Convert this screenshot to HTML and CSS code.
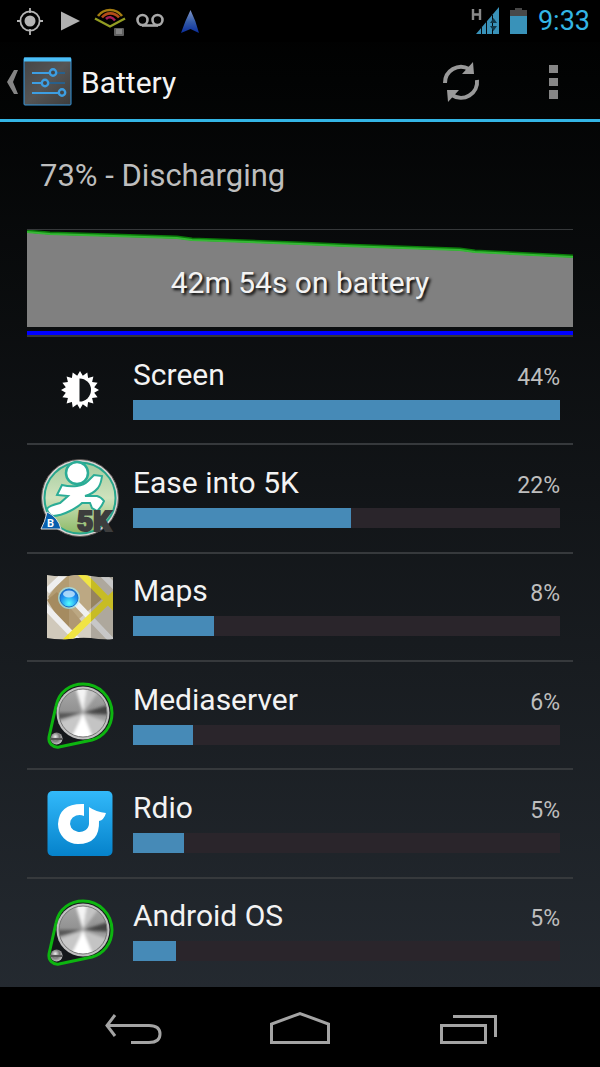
FILE: index.html
```html
<!DOCTYPE html>
<html lang="en">
<head>
  <meta charset="UTF-8" />
  <meta name="viewport" content="width=device-width, initial-scale=1.0"/>
  <title>Battery</title>
  <link rel="stylesheet" href="styles.css">
</head>
<body>

  <!-- shared gradients and the system process icon -->
  <svg class="defs" width="0" height="0" aria-hidden="true">
    <defs>
      <linearGradient id="metal" x1="0" y1="0" x2="0" y2="1">
        <stop offset="0" stop-color="#a8a8a8"/>
        <stop offset=".5" stop-color="#909090"/>
        <stop offset="1" stop-color="#d0d0d0"/>
      </linearGradient>
      <radialGradient id="knob" cx=".4" cy=".35" r=".7">
        <stop offset="0" stop-color="#eee"/>
        <stop offset=".5" stop-color="#777"/>
        <stop offset="1" stop-color="#ccc"/>
      </radialGradient>
      <clipPath id="disc"><circle cx="43" cy="38" r="24"/></clipPath>
      <filter id="soft"><feGaussianBlur stdDeviation="1.5"/></filter>
    </defs>
    <symbol id="system" viewBox="0 0 80 80">
      <path d="M16 31C19 16 31 9 43 9a29 29 0 0 1 29 29c0 14-9 24-20 27L19 72c-6 1-11-4-10-10Z" fill="#14171a" stroke="#0db510" stroke-width="3"/>
      <circle cx="43" cy="38" r="26.500" fill="#c0c0c0"/>
      <circle cx="43" cy="38" r="24" fill="url(#metal)"/>
      <g clip-path="url(#disc)">
        <g filter="url(#soft)">
          <path d="M43 38L34 8h14z" fill="#f4f4f4"/>
          <path d="M43 38L48 8 62 12z" fill="#c4c4c4"/>
          <path d="M43 38L74 28v12z" fill="#454545"/>
          <path d="M43 38L12 38v8z" fill="#555"/>
          <path d="M43 38L12 50 26 70z" fill="#c8c8c8"/>
          <path d="M43 38L28 70h28z" fill="#fff"/>
          <path d="M43 38L56 70 74 50z" fill="#c4c4c4"/>
        </g>
      </g>
      <circle cx="43" cy="38" r="24" fill="none" stroke="#777" stroke-width="1"/>
      <circle cx="16.500" cy="63.500" r="6" fill="url(#knob)"/>
      <path d="M11 64h11" stroke="#555" stroke-width="2"/>
    </symbol>
  </svg>

  <div class="status-bar">
    <div class="notifications">
      <svg width="40" height="40" viewBox="0 0 40 40">
        <g fill="none" stroke="#b4b4b4" stroke-width="1.800"><circle cx="20" cy="20" r="9.600"/><path d="M20 7v5M20 28v6M7 20h4M29 20h4"/></g>
        <circle cx="20" cy="20" r="5.500" fill="#b4b4b4"/>
      </svg>
      <svg width="40" height="40" viewBox="0 0 40 40"><path d="M11 10.500l19 9.500-19 9.500z" fill="#b0b0b0"/></svg>
      <svg width="40" height="40" viewBox="0 0 40 40" fill="none">
        <path d="M5 17.500l15 8 15-8" stroke="#929c22" stroke-width="2.400"/>
        <path d="M8 15C14 7 26 7 32 15" stroke="#a47c10" stroke-width="2.600"/>
        <path d="M12 16.500c4-5 12-6 17 0" stroke="#b44c18" stroke-width="2.600"/>
        <path d="M16 18c3-3 6-2 9 1.500" stroke="#a31c57" stroke-width="2.600"/>
        <rect x="24" y="27" width="10" height="8" rx="1" fill="#606060"/>
        <path d="M26 29h6M27 30v3M29 30v3M31 30v3" stroke="#aaa"/>
      </svg>
      <svg width="40" height="40" viewBox="0 0 40 40" fill="none" stroke="#a8a8a8" stroke-width="2.600"><circle cx="12.500" cy="19" r="5"/><circle cx="27.500" cy="19" r="5"/><path d="M12 24.500h16"/></svg>
      <svg width="40" height="40" viewBox="0 0 40 40">
        <defs><linearGradient id="arrow" x1="0" y1="0" x2="0" y2="1"><stop offset="0" stop-color="#8296c8"/><stop offset=".5" stop-color="#365da9"/><stop offset="1" stop-color="#0a2d9b"/></linearGradient></defs>
        <path d="M20.500 9Q26 20 29 32l-8.500-4L11 32Q15 20 20.500 9z" fill="url(#arrow)"/>
      </svg>
    </div>
    <div class="system-status">
      <svg width="30" height="30" viewBox="0 0 30 30">
        <path d="M3 3v11M10 3v11M3 8.500h7" stroke="#8a8a8a" stroke-width="2.400"/>
        <path d="M6 28L29 1v27z" fill="#3992b9"/>
        <path d="M11.500 20v9M16.500 15v14M22.500 9v19" stroke="#05090b" stroke-width="1"/>
        <path d="M20 17l3.500-5 3.500 5zM20 20l3.500 5 3.500-5z" fill="#12394a"/>
      </svg>
      <svg width="18" height="28" viewBox="0 0 18 28"><path d="M0 3h5V1h7v2h5v6H0z" fill="#484848"/><path d="M0 9h17v18H0z" fill="#3992b9"/></svg>
      <span class="clock">9:33</span>
    </div>
  </div>

  <header class="action-bar">
    <a class="up" href="#">
      <svg width="14" height="26" viewBox="0 0 14 26"><path d="M8 1h4L7 13l5 12H8L1 13z" fill="#858585"/></svg>
      <svg width="50" height="50" viewBox="0 0 50 50">
        <defs><linearGradient id="panel" x1="0" y1="0" x2="1" y2="1"><stop offset="0" stop-color="#444"/><stop offset=".5" stop-color="#555"/><stop offset="1" stop-color="#3c3c3c"/></linearGradient></defs>
        <rect x="1" y="1" width="47" height="47" rx="1" fill="url(#panel)" stroke="#3797dd"/>
        <path d="M1 2.500h47" stroke="#4cc0f8" stroke-width="4"/>
        <path d="M9 16h17M9 26h9M9 36h26" stroke="#3d9ee2" stroke-width="2"/>
        <path d="M33 16h9M25 26h17" stroke="#28608c" stroke-width="2"/>
        <g fill="#454545" stroke="#3d9ee2" stroke-width="2.400"><circle cx="30" cy="15.500" r="3.200"/><circle cx="22" cy="26" r="3.200"/><circle cx="39" cy="35.500" r="3.200"/></g>
      </svg>
      <h1>Battery</h1>
    </a>
    <button class="action" aria-label="Refresh">
      <svg width="40" height="40" viewBox="0 0 40 40">
        <g fill="none" stroke="#999" stroke-width="4"><path d="M4 21A16 16 0 0 1 28 7"/><path d="M36 18A16 16 0 0 1 11 33"/></g>
        <path d="M32 0l1 12H21zM6 28h12L7 40z" fill="#999"/>
      </svg>
    </button>
    <button class="action" aria-label="More options">
      <svg width="10" height="34" viewBox="0 0 10 34"><path d="M0 0h9v8H0zM0 13h9v8H0zM0 25h9v9H0z" fill="#868686"/></svg>
    </button>
  </header>

  <main>
    <p class="state">73% - Discharging</p>

    <a class="history" href="#">
      <svg width="100%" height="105" viewBox="0 0 546 105" preserveAspectRatio="none">
        <path d="M0 1L23 3 150 7 165 9 273 13 318 15 433 19 448 21 546 26V97H0z" fill="#808080"/>
        <path d="M0 1L23 3 150 7 165 9 273 13 318 15 433 19 448 21 546 26" fill="none" stroke="#0a7a0a" stroke-width="3"/>
        <path d="M0 2L23 4 150 8 165 10 273 14 318 16 433 20 448 22 546 27" fill="none" stroke="#35b835" stroke-width="2"/>
        <path d="M0 101h546v4H0z" fill="#00f"/>
      </svg>
      <span class="duration">42m 54s on battery</span>
    </a>

    <ul class="usage">
      <li>
        <svg class="icon" viewBox="0 0 80 80">
          <path d="M40 21L42.800 25.800 47.300 22.400 48.100 27.900 53.400 26.600 52.100 31.900 57.600 32.700 54.200 37.200 59 40 54.200 42.800 57.600 47.300 52.100 48.100 53.400 53.400 48.100 52.100 47.300 57.600 42.800 54.200 40 59 37.200 54.200 32.700 57.600 31.900 52.100 26.600 53.400 27.900 48.100 22.400 47.300 25.800 42.800 21 40 25.800 37.200 22.400 32.700 27.900 31.900 26.600 26.600 31.900 27.900 32.700 22.400 37.200 25.800z" fill="#fff"/>
          <path d="M39.500 28.500a11.500 11.500 0 0 1 0 23z" fill="#111417"/>
        </svg>
        <div class="info">
          <div class="label"><span>Screen</span><span class="percent">44%</span></div>
          <div class="bar"><div class="fill" style="width: 100%"></div></div>
        </div>
      </li>
      <li>
        <svg class="icon" viewBox="0 0 80 80">
          <defs><linearGradient id="grass" x1="0" y1="0" x2="0" y2="1"><stop offset="0" stop-color="#a5cc9f"/><stop offset=".5" stop-color="#cfe2bd"/><stop offset="1" stop-color="#8eba68"/></linearGradient></defs>
          <circle cx="40" cy="40" r="38.500" fill="#d8d4d2" stroke="#5a5452"/>
          <circle cx="40" cy="40" r="35.500" fill="url(#grass)" stroke="#27a68c" stroke-width="2"/>
          <path d="M22 27Q30 29 37 28 44 27 48 23L54 17 62 18Q61 26 58 30 53 36 45 38L57 38Q61 39 64 43 61 50 57 53L52 50 50 45 42 45Q38 49 30 53 20 58 13 58 8 56 7 51 8 48 20 45L28 38 17 37z" fill="#fff" stroke="#2aac96" stroke-width="2"/>
          <circle cx="37" cy="15" r="11" fill="#fff" stroke="#2aac96" stroke-width="2.500"/>
          <path d="M1 71Q5 64 7 54q11 5 14 17z" fill="#075fae" stroke="#ddd"/>
          <text x="7" y="69" class="badge">B</text>
          <text x="37" y="73" class="distance">5K</text>
        </svg>
        <div class="info">
          <div class="label"><span>Ease into 5K</span><span class="percent">22%</span></div>
          <div class="bar"><div class="fill" style="width: 51%"></div></div>
        </div>
      </li>
      <li>
        <svg class="icon" viewBox="0 0 80 80">
          <defs>
            <clipPath id="sheet"><path d="M7 8q11 2 22 1 11-2 22 0 11 2 22 1v62q-11 1-22-1-11-1-22 1-11 1-22-1z"/></clipPath>
            <radialGradient id="pin" cx=".5" cy=".8" r=".8"><stop offset="0" stop-color="#5ff"/><stop offset=".6" stop-color="#1e90f0"/><stop offset="1" stop-color="#1768d0"/></radialGradient>
          </defs>
          <g clip-path="url(#sheet)">
            <path d="M0 0h80v80H0z" fill="#d0c9bb"/>
            <path d="M28 3L8 30 32 58 62 32 42 6z" fill="#b39c72"/>
            <path d="M7 33l10-8 25 30-14 12z" fill="#a58b60"/>
            <path d="M0 34l44 46M7 24L28 4M34 34l42 44M58 3l22 22" stroke="#eee" stroke-width="6" fill="none"/>
            <path d="M38 3L80 46M80 22L24 76" stroke="#eee12b" stroke-width="7" fill="none"/>
            <path d="M29 0h22v80H29z" fill="#fff" opacity=".12"/>
            <path d="M51 0h22v80H51z" fill="#000" opacity=".16"/>
          </g>
          <circle cx="29" cy="31" r="11" fill="#9eefff" opacity=".65"/>
          <circle cx="29" cy="31" r="9" fill="url(#pin)" stroke="#1670c8"/>
          <ellipse cx="29" cy="27" rx="6" ry="3.500" fill="#c8eaff" opacity=".8"/>
        </svg>
        <div class="info">
          <div class="label"><span>Maps</span><span class="percent">8%</span></div>
          <div class="bar"><div class="fill" style="width: 19%"></div></div>
        </div>
      </li>
      <li>
        <svg class="icon" viewBox="0 0 80 80"><use href="#system"/></svg>
        <div class="info">
          <div class="label"><span>Mediaserver</span><span class="percent">6%</span></div>
          <div class="bar"><div class="fill" style="width: 14%"></div></div>
        </div>
      </li>
      <li>
        <svg class="icon" viewBox="0 0 80 80">
          <defs><linearGradient id="sky" x1="0" y1="0" x2="0" y2="1"><stop offset="0" stop-color="#32b9fa"/><stop offset="1" stop-color="#0582cb"/></linearGradient></defs>
          <rect x="7.500" y="8" width="65" height="65" rx="5" fill="url(#sky)"/>
          <path d="M44 21v12a9.500 8.500 0 1 0 5 8V24q7 5 17 6-2 7-7 8Q60 61 38 61a20 20 0 0 1-20-20q1-21 26-20z" fill="#fff"/>
        </svg>
        <div class="info">
          <div class="label"><span>Rdio</span><span class="percent">5%</span></div>
          <div class="bar"><div class="fill" style="width: 12%"></div></div>
        </div>
      </li>
      <li>
        <svg class="icon" viewBox="0 0 80 80"><use href="#system"/></svg>
        <div class="info">
          <div class="label"><span>Android OS</span><span class="percent">5%</span></div>
          <div class="bar"><div class="fill" style="width: 10%"></div></div>
        </div>
      </li>
    </ul>
  </main>

  <nav class="nav-bar">
    <button aria-label="Back">
      <svg width="60" height="34" viewBox="0 0 60 34"><path d="M12 5L4 15.500 12 26M4 15.500h42q11 0 11 8.500t-11 8.500H28"/></svg>
    </button>
    <button aria-label="Home">
      <svg width="60" height="34" viewBox="0 0 60 34"><path d="M1.500 32.500V14L30 3.500 58.500 14v18.500z"/></svg>
    </button>
    <button aria-label="Recent apps">
      <svg width="60" height="34" viewBox="0 0 60 34"><path d="M4.500 15.500h44v17h-44zM16 6.500h42.500V27"/></svg>
    </button>
  </nav>

</body>
</html>
```
FILE: styles.css
```css
* {
  box-sizing: border-box;
  margin: 0;
  padding: 0;
}

body {
  display: flex;
  flex-direction: column;
  min-height: 100vh;
  background: linear-gradient(#000 0, #020303 80px, #272d34 100%);
  color: #f3f3f3;
  font-family: Roboto, "Noto Sans", sans-serif;
  font-size: 30px;
}

svg {
  display: block;
  flex-shrink: 0;
}

a {
  color: inherit;
  text-decoration: none;
}

button {
  background: none;
  border: none;
  display: flex;
  align-items: center;
  justify-content: center;
}

.defs {
  position: absolute;
}

/* status bar */
.status-bar {
  display: flex;
  justify-content: space-between;
  height: 42px;
  padding: 0 10px;
  background-color: #000;
}

.notifications,
.system-status {
  display: flex;
  align-items: center;
}

.system-status {
  gap: 10px;
}

.clock {
  color: #33b5e5;
  font-size: 27px;
}

/* action bar */
.action-bar {
  display: flex;
  height: 80px;
  padding-top: 3px;
  border-bottom: 3px solid #33b5e5;
}

.up {
  display: flex;
  align-items: center;
  flex-grow: 1;
  padding-left: 6px;
}

.up svg + svg {
  margin-left: 3px;
}

.up h1 {
  margin-left: 8px;
  font-size: 30px;
  font-weight: 400;
}

.action {
  width: 93px;
}

/* battery details */
main {
  display: flex;
  flex-direction: column;
  flex-grow: 1;
  padding: 0 27px;
}

.state {
  padding-left: 13px;
  font-size: 31px;
  line-height: 107px;
  color: #bebebe;
}

.history {
  display: grid;
  border-top: 1px solid #36383a;
  border-bottom: 2px solid #363636;
}

.history > * {
  grid-area: 1 / 1;
}

.duration {
  align-self: center;
  justify-self: center;
  text-shadow: 2px 2px 3px #000;
}

.usage {
  display: grid;
  grid-auto-rows: 1fr;
  flex-grow: 1;
  list-style: none;
}

.usage li {
  display: flex;
  align-items: center;
  min-height: 100px;
  border-bottom: 2px solid #36393c;
}

.usage li:last-child {
  border-bottom-color: transparent;
}

.icon {
  width: 80px;
  height: 80px;
  margin: 0 13px;
}

.badge {
  fill: #fff;
  font-size: 11px;
  font-weight: 700;
}

.distance {
  fill: #3d3d3d;
  stroke: #3d3d3d;
  stroke-width: 2px;
  font-size: 28px;
  font-weight: 900;
}

.info {
  flex-grow: 1;
  padding: 0 13px 4px 0;
}

.label {
  display: flex;
  align-items: baseline;
  justify-content: space-between;
  line-height: 36px;
}

.percent {
  color: #bebebe;
  font-size: 23px;
}

.bar {
  height: 20px;
  margin-top: 4px;
  background-color: #2a252b;
}

.fill {
  height: 100%;
  background-color: #468ab7;
}

/* navigation bar */
.nav-bar {
  display: flex;
  height: 80px;
  padding: 0 50px;
  background-color: #000;
}

.nav-bar button {
  flex: 1;
}

.nav-bar path {
  fill: none;
  stroke: #a4a4a4;
  stroke-width: 3px;
}
```
